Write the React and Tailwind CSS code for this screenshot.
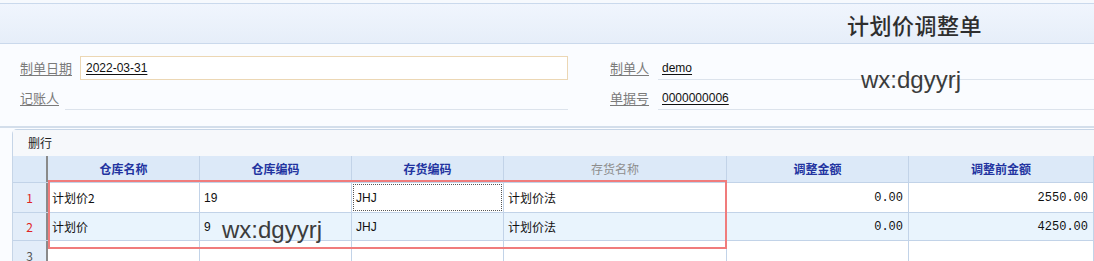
import React from "react";

const cols = "grid grid-cols-[35px_152px_152px_152px_223px_182px_185px]";

function HeadCell({ children, muted }) {
  return (
    <div
      className={`flex items-center justify-center border-r border-[#c2d3e8] text-[12px] font-bold ${
        muted ? "text-[#8d8d8d] font-normal" : "text-[#2233a0]"
      }`}
    >
      {children}
    </div>
  );
}

function Cell({ children, right, mono, className = "" }) {
  return (
    <div
      className={`relative flex items-center border-r border-[#c2d3e8] text-[12px] text-[#111] ${
        right ? "justify-end pr-[5px]" : "pl-[4px]"
      } ${mono ? "font-['Liberation_Mono',monospace] text-[12px]" : ""} ${className}`}
    >
      {children}
    </div>
  );
}

export default function App() {
  return (
    <div className="relative w-[1094px] h-[261px] overflow-hidden bg-[#fafcff] font-['Noto_Sans_CJK_SC','Liberation_Sans',sans-serif]">
      <div className="h-[3px] bg-[#f6f9fd]" />
      <header className="h-[41px] border-y border-[#cad9ec] bg-gradient-to-b from-[#f0f5fd] to-[#e6eef9] flex items-center pl-[847px]">
        <span className="text-[22px] leading-none font-medium text-[#2e2e2e] tracking-[0.5px]">计划价调整单</span>
      </header>

      <section className="h-[82px] flex pt-[12px]">
        <div className="ml-[20px] w-[548px] flex flex-col gap-[6px]">
          <div className="flex items-center h-[24px]">
            <span className="w-[60px] text-[13px] text-[#7a7a7a] underline underline-offset-2">制单日期</span>
            <div className="flex-1 h-[24px] border border-[#ecd7b4] bg-white flex items-center pl-[5px]">
              <span className="font-['Liberation_Sans',sans-serif] text-[12px] text-[#111] underline underline-offset-2">
                2022-03-31
              </span>
            </div>
          </div>
          <div className="flex items-center h-[24px]">
            <span className="w-[45px] text-[13px] text-[#7a7a7a] underline underline-offset-2">记账人</span>
            <div className="flex-1 self-stretch border-b border-[#dce3ec]" />
          </div>
        </div>
        <div className="ml-[42px] flex-1 flex flex-col gap-[6px]">
          <div className="flex items-center h-[24px]">
            <span className="w-[48px] text-[13px] text-[#7a7a7a] underline underline-offset-2">制单人</span>
            <div className="flex-1 self-stretch border-b border-[#dce3ec] flex items-center pl-[4px]">
              <span className="font-['Liberation_Sans',sans-serif] text-[12px] text-[#111] underline underline-offset-2">
                demo
              </span>
            </div>
          </div>
          <div className="flex items-center h-[24px]">
            <span className="w-[48px] text-[13px] text-[#7a7a7a] underline underline-offset-2">单据号</span>
            <div className="flex-1 self-stretch border-b border-[#dce3ec] flex items-center pl-[4px]">
              <span className="font-['Liberation_Sans',sans-serif] text-[12px] text-[#111] underline underline-offset-2">
                0000000006
              </span>
            </div>
          </div>
        </div>
      </section>
      <div className="h-[2px] bg-[#d3deeb]" />
      <div className="h-[1px]" />

      <div className="ml-[12px] border-l border-t border-[#c6d5e7] rounded-tl-[5px] bg-white">
        <div className="h-[26px] bg-[#f6f8fb] flex items-center pl-[15px] text-[12px] text-[#222]">删行</div>
        <div className={`${cols} h-[27px] bg-[#dce9f8] border-b border-[#c2d3e8]`}>
          <div className="border-r-2 border-[#8a8a8a]" />
          <HeadCell>仓库名称</HeadCell>
          <HeadCell>仓库编码</HeadCell>
          <HeadCell>存货编码</HeadCell>
          <HeadCell muted>存货名称</HeadCell>
          <HeadCell>调整金额</HeadCell>
          <HeadCell>调整前金额</HeadCell>
        </div>
        <div className={`${cols} h-[30px] bg-white border-b border-[#c2d3e8]`}>
          <div className="flex items-center justify-center bg-[#e3edf9] border-r-2 border-[#8a8a8a] text-[12px] text-[#e02424]">1</div>
          <Cell>计划价2</Cell>
          <Cell className="font-['Liberation_Sans',sans-serif]">19</Cell>
          <Cell className="font-['Liberation_Sans',sans-serif]">
            <div className="absolute inset-[1px] border border-dotted border-[#555]" />
            JHJ
          </Cell>
          <Cell>计划价法</Cell>
          <Cell right mono>0.00</Cell>
          <Cell right mono>2550.00</Cell>
        </div>
        <div className={`${cols} h-[28px] bg-[#e9f4fd] border-b border-[#c2d3e8]`}>
          <div className="flex items-center justify-center bg-[#e3edf9] border-r-2 border-[#8a8a8a] text-[12px] text-[#e02424]">2</div>
          <Cell>计划价</Cell>
          <Cell className="font-['Liberation_Sans',sans-serif] text-[11px] items-start pt-[5px]">9</Cell>
          <Cell className="font-['Liberation_Sans',sans-serif]">JHJ</Cell>
          <Cell>计划价法</Cell>
          <Cell right mono>0.00</Cell>
          <Cell right mono>4250.00</Cell>
        </div>
        <div className={`${cols} h-[24px] bg-white`}>
          <div className="flex items-start justify-center pt-[6px] bg-[#e3edf9] border-r-2 border-[#8a8a8a] text-[12px] text-[#555]">3</div>
          <Cell />
          <Cell />
          <Cell />
          <Cell />
          <Cell />
          <Cell />
        </div>
      </div>

      {/* red highlight box */}
      <div className="absolute left-[48px] top-[180px] w-[679px] h-[69px] border-2 border-[#f07c7c] pointer-events-none" />

      {/* watermarks */}
      <div className="absolute left-[861px] top-[68px] font-['Liberation_Sans',sans-serif] text-[24px] leading-none text-[#3c3c3c]">
        wx:dgyyrj
      </div>
      <div className="absolute left-[222px] top-[218px] font-['Liberation_Sans',sans-serif] text-[24px] leading-none text-[#3c3c3c]">
        wx:dgyyrj
      </div>
    </div>
  );
}
